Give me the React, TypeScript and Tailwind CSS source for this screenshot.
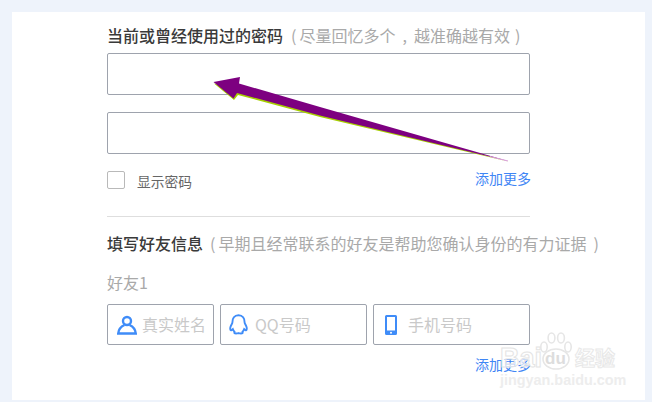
const font = { fontFamily: '"Noto Sans CJK SC", "Liberation Sans", sans-serif' };
const latin = { fontFamily: '"Liberation Sans", sans-serif' };

function Field({ width, icon, text }: { width: string; icon: React.ReactNode; text: string }) {
  return (
    <div className={`${width} h-[41px] shrink-0 flex items-center border border-[#9ea3ad] rounded-[2px] bg-white`}>
      {icon}
      <span className="text-[16px] leading-[20px] text-[#c9c9c9] whitespace-nowrap -mt-[2px]">{text}</span>
    </div>
  );
}

export default function App() {
  return (
    <div style={font} className="relative w-[652px] h-[402px] overflow-hidden bg-[#eef3fb] pt-3 pl-3 pr-[7px] pb-[2px]">
      <div className="w-[633px] h-[388px] bg-white pl-[95px] pt-[14px]">
        <div className="w-[510px] h-[18px] flex items-center text-[16px] leading-[18px] whitespace-nowrap">
          <span className="font-medium text-[#3a3a3a]">当前或曾经使用过的密码</span>
          <span className="text-[#a9a9a9] ml-[8px]">(</span>
          <span className="text-[#a9a9a9] ml-[3px]">尽量回忆多个</span>
          <span className="text-[#a9a9a9] mx-[7px]">,</span>
          <span className="text-[#a9a9a9]">越准确越有效</span>
          <span className="text-[#a9a9a9] ml-[5px]">)</span>
        </div>
        <div className="w-[423px] h-[42px] mt-[9px] border border-[#9ea3ad] rounded-[2px]" />
        <div className="w-[423px] h-[42px] mt-[17px] border border-[#9ea3ad] rounded-[2px]" />
        <div className="w-[424px] flex items-center mt-[17px] h-[18px]">
          <div className="w-[18px] h-[18px] border border-[#b9b9b9] rounded-[2px]" />
          <span className="ml-3 text-[13.75px] leading-[18px] text-[#666666] mt-[1px]">显示密码</span>
          <span className="ml-auto text-[14px] leading-[18px] text-[#3f86f5] -mt-[5px]">添加更多</span>
        </div>
        <div className="w-[423px] h-px bg-[#dedede] mt-[27px]" />
        <div className="h-[18px] mt-[17px] flex items-center text-[16px] leading-[18px] whitespace-nowrap">
          <span className="font-medium text-[#3a3a3a]">填写好友信息</span>
          <span className="text-[#a9a9a9] ml-[7px]">(</span>
          <span className="text-[#a9a9a9] ml-[3px]">早期且经常联系的好友是帮助您确认身份的有力证据</span>
          <span className="text-[#a9a9a9] ml-[7px]">)</span>
        </div>
        <div className="text-[16px] leading-[18px] text-[#a9a9a9] mt-[21px]">好友1</div>
        <div className="flex gap-[6px] mt-[13px] w-[423px]">
          <Field
            width="w-[107px]"
            text="真实姓名"
            icon={
              <svg viewBox="0 0 20 20" className="w-5 h-5 ml-[9px] mr-[5px] shrink-0" fill="none" stroke="#3f8cf8" strokeWidth="2.4">
                <circle cx="10" cy="6" r="4" />
                <path d="M7.5 10 C4 11.5 1.6 14.5 1.2 18.5 H18.8 C18.4 14.5 16 11.5 12.5 10" />
              </svg>
            }
          />
          <Field
            width="w-[147px]"
            text="QQ号码"
            icon={
              <svg viewBox="0 0 20 22" className="w-[19px] h-[21px] ml-[8px] mr-[7px] shrink-0" fill="none" stroke="#3f8cf8" strokeWidth="2">
                <path d="M10 1.2 C5.5 1.2 3.6 4.8 3.6 8.5 C3.6 10 2 11.5 1.4 14 C1 16 1.6 17.6 2.6 17 L4 15.8 C4.4 17 5 18 5.8 18.8 C4.8 20.4 7 20.8 10 20 C13 20.8 15.2 20.4 14.2 18.8 C15 18 15.6 17 16 15.8 L17.4 17 C18.4 17.6 19 16 18.6 14 C18 11.5 16.4 10 16.4 8.5 C16.4 4.8 14.5 1.2 10 1.2 Z" />
              </svg>
            }
          />
          <Field
            width="w-[157px]"
            text="手机号码"
            icon={
              <svg viewBox="0 0 12 20" className="w-3 h-[20px] ml-[11px] mr-[11px] shrink-0">
                <path fill="#3f8cf8" fillRule="evenodd" d="M1.5 0 H10.5 A1.5 1.5 0 0 1 12 1.5 V18.5 A1.5 1.5 0 0 1 10.5 20 H1.5 A1.5 1.5 0 0 1 0 18.5 V1.5 A1.5 1.5 0 0 1 1.5 0 Z M2 2 V15.5 H10 V2 Z" />
                <circle cx="6" cy="17.7" r="1" fill="#fff" />
              </svg>
            }
          />
        </div>
        <div className="w-[424px] text-right text-[14px] leading-[18px] text-[#3f86f5] mt-[10px]">添加更多</div>
      </div>

      {/* annotation arrow */}
      <svg className="absolute left-0 top-0 pointer-events-none" width="652" height="402" viewBox="0 0 652 402">
        <polygon points="214,83.5 234,100 238,95 320,117 508,161.5" fill="#a6cf00" />
        <polygon points="213.5,82 240,77 239,83.5 320,107 508,161 400,135 320,115.5 237,93 233.5,98.5" fill="#7d0080" />
        <line x1="490" y1="156.5" x2="508" y2="161" stroke="#d9a0d9" strokeWidth="1" />
      </svg>

      {/* watermark */}
      <div className="absolute left-[500px] top-[332px] w-[116px] pointer-events-none select-none">
        <div className="relative h-[38px]">
          <span style={latin} className="absolute left-0 top-[13px] text-[27px] leading-[27px] font-bold text-white/70 [-webkit-text-stroke:1px_#e4e4e4] whitespace-nowrap">Bai</span>
          <svg viewBox="0 0 34 38" className="absolute left-[39px] top-0 w-[34px] h-[38px]" fill="#ffffff" stroke="#e6e6e6" strokeWidth="1.6">
            <ellipse cx="5" cy="15" rx="3.2" ry="5" />
            <ellipse cx="12.5" cy="6" rx="3.4" ry="5" />
            <ellipse cx="22" cy="6" rx="3.4" ry="5" />
            <ellipse cx="29" cy="15" rx="3.2" ry="5" />
            <ellipse cx="17" cy="27" rx="13" ry="10" />
          </svg>
          <span style={latin} className="absolute left-[45px] top-[17px] text-[17px] leading-[20px] font-bold text-[#dddddd]">du</span>
          <span className="absolute left-[75px] top-[15px] text-[20px] leading-[22px] font-bold text-white [-webkit-text-stroke:1px_#e8e8e8] whitespace-nowrap">经验</span>
        </div>
        <div style={latin} className="text-[14.4px] leading-[16px] mt-[2px] font-bold text-[#ededed] whitespace-nowrap">jingyan.baidu.com</div>
      </div>
    </div>
  );
}
